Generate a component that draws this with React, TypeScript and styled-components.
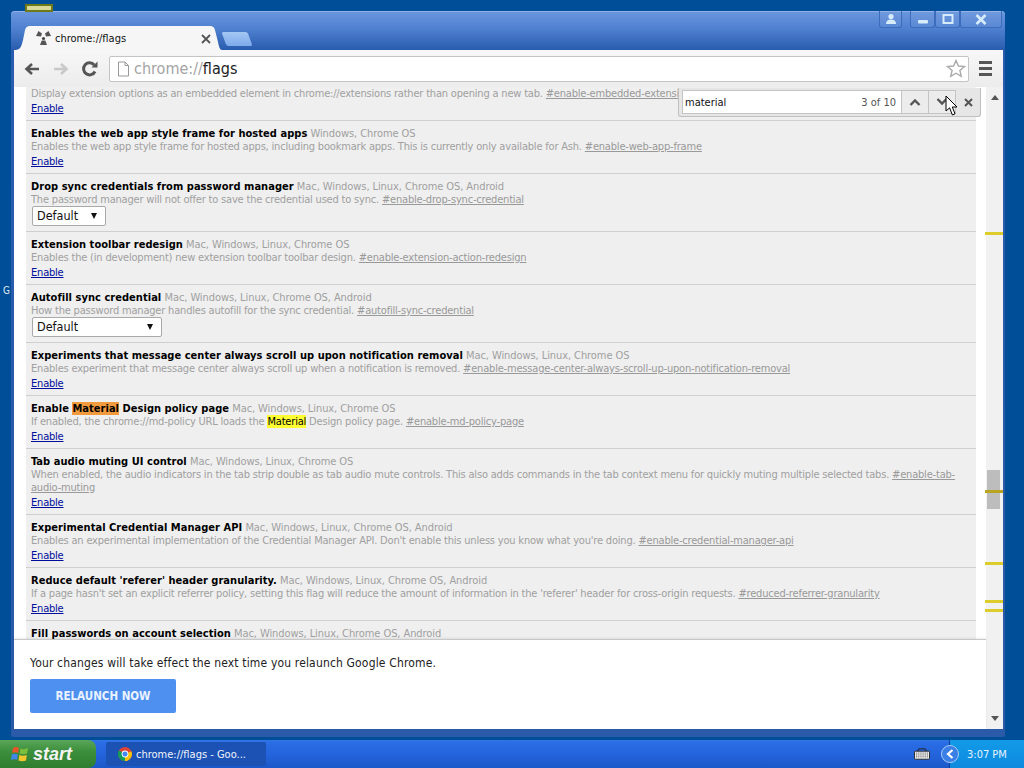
import React from "react";
import styled, { createGlobalStyle } from "styled-components";

const UI_FONT = `"DejaVu Sans", Tahoma, "Liberation Sans", sans-serif`;

const GlobalStyle = createGlobalStyle`
  html, body {
    margin: 0;
    padding: 0;
    width: 1024px;
    height: 768px;
    overflow: hidden;
  }
  body {
    font-family: ${UI_FONT};
    font-stretch: condensed;
  }
`;

const Screen = styled.div`
  width: 1024px;
  height: 768px;
  display: flex;
  flex-direction: column;
  overflow: hidden;
`;

const Desktop = styled.div`
  position: relative;
  flex: 1;
  min-height: 0;
  display: flex;
  padding: 11px 19px 3px 11px;
  background: #014e98;
`;

const DesktopIcon = styled.div`
  position: absolute;
  left: 25px;
  top: 4px;
  width: 28px;
  height: 8px;
  background: #d8d89a;
  border: 2px solid #6e7a18;
  box-sizing: border-box;
`;

const DesktopLetter = styled.div`
  position: absolute;
  left: 3px;
  top: 285px;
  font-size: 10px;
  line-height: 12px;
  color: #dfe8f4;
`;

const Window = styled.div`
  flex: 1;
  min-width: 0;
  display: flex;
  flex-direction: column;
  padding: 0 2px 8px 3px;
  border-radius: 4px 4px 2px 2px;
  background: linear-gradient(180deg, #6a96dd 0, #4f80d0 18px, #295cae 39px, #2a5aa8 100%);
  box-shadow: inset 0 1px 0 #8fb0e6;
`;

const TitleBar = styled.div`
  height: 39px;
  display: flex;
  align-items: flex-end;
  flex-shrink: 0;
`;

const Tab = styled.div`
  width: 208px;
  height: 24px;
  display: flex;
  align-items: center;
  gap: 3px;
  padding: 1px 11px 0 21px;
  box-sizing: border-box;
  background: #f6f6f6;
  clip-path: path("M0 24 C6 24 7 22 9 14 L11 4 C12 1 13 0 16 0 L196 0 C199 0 200 1 201 4 L204 16 C205 21 206 24 208 24 Z");
`;

const TabTitle = styled.span`
  flex: 1;
  font-size: 11px;
  color: #111;
`;

const TabClose = styled.span`
  display: flex;
`;

const NewTab = styled.div`
  width: 26px;
  height: 14px;
  margin: 0 0 4px 2px;
  background: linear-gradient(180deg, #a4c8f4, #7daaea);
  border-radius: 2px;
  transform: skewX(20deg);
`;

const CaptionGroup = styled.div`
  margin-left: auto;
  align-self: flex-start;
  display: flex;
  height: 17px;
  margin-right: 1px;
`;

const CaptionButton = styled.div<{ $width: number }>`
  width: ${(p) => p.$width}px;
  display: flex;
  align-items: center;
  justify-content: center;
  box-sizing: border-box;
  border: 1px solid #3c6cbc;
  border-top: 0;
  border-radius: 0 0 3px 3px;
  background: rgba(255, 255, 255, 0.05);
`;

const CaptionGap = styled.div`
  width: 8px;
`;

const Toolbar = styled.div`
  height: 37px;
  flex-shrink: 0;
  display: flex;
  align-items: center;
  padding-left: 3px;
  box-sizing: border-box;
  background: linear-gradient(180deg, #f7f7f7, #ececec);
`;

const NavIcon = styled.div`
  width: 29px;
  display: flex;
  justify-content: center;
`;

const AddressBar = styled.div`
  width: 860px;
  height: 26px;
  margin-left: 5px;
  display: flex;
  align-items: center;
  gap: 4px;
  padding: 0 2px 0 7px;
  box-sizing: border-box;
  background: #fff;
  border: 1px solid #c4c4c4;
  border-radius: 2px;
`;

const AddressText = styled.div`
  flex: 1;
  font-size: 16px;
  color: #a4a4a4;
`;

const AddressPath = styled.span`
  color: #222;
`;

const MenuIcon = styled.div`
  margin-left: 10px;
  display: flex;
  flex-direction: column;
  gap: 3px;
`;

const MenuLine = styled.div`
  width: 13px;
  height: 3px;
  background: #555;
`;

const Viewport = styled.div`
  position: relative;
  flex: 1;
  min-height: 0;
  display: flex;
  background: #fff;
`;

const PageColumn = styled.div`
  flex: 1;
  min-width: 0;
  display: flex;
  flex-direction: column;
`;

const FlagsPage = styled.div`
  flex: 1;
  min-height: 0;
  overflow: hidden;
  display: flex;
  padding-left: 12px;
`;

const FlagList = styled.div`
  flex: 1;
  min-width: 0;
  background: #efefef;
`;

const Gutter = styled.div`
  width: 10px;
  flex-shrink: 0;
`;

const FlagRow = styled.div`
  padding: 6px 20px 3px 5px;
  border-bottom: 1px solid #cfcfcf;

  &:first-child {
    padding-top: 0;
  }
`;

const FlagHeading = styled.div`
  font-size: 11px;
  line-height: 13px;
  white-space: nowrap;
`;

const FlagName = styled.span`
  font-weight: 700;
  letter-spacing: 0.04px;
  color: #000;
`;

const Platforms = styled.span`
  letter-spacing: -0.08px;
  color: #a0a0a0;
`;

const FlagDesc = styled.div`
  font-size: 11px;
  line-height: 13px;
  letter-spacing: -0.19px;
  color: #a0a0a0;
`;

const HashLink = styled.span`
  text-decoration: underline;
  color: #999;
`;

const Match = styled.span<{ $active?: boolean }>`
  color: #000;
  font-weight: inherit;
  background: ${(p) => (p.$active ? "#f19a3e" : "#ffff33")};
`;

const EnableLink = styled.div`
  font-size: 11px;
  line-height: 17px;
  letter-spacing: -0.2px;
  color: #000e9c;
  text-decoration: underline;
`;

const FlagSelect = styled.div<{ $width: number }>`
  width: ${(p) => p.$width}px;
  height: 20px;
  margin: 0 0 2px 1px;
  display: flex;
  align-items: center;
  justify-content: space-between;
  padding: 0 8px 1px 4px;
  box-sizing: border-box;
  background: #fff;
  border: 1px solid #a9a9a9;
  border-radius: 2px;
  font-size: 12.5px;
  color: #111;
`;

const SelectArrow = styled.span`
  width: 0;
  height: 0;
  border-left: 3.5px solid transparent;
  border-right: 3.5px solid transparent;
  border-top: 6px solid #111;
`;

const RelaunchBar = styled.div`
  height: 90px;
  flex-shrink: 0;
  box-sizing: border-box;
  padding: 15px 0 0 16px;
  background: #fff;
  border-top: 1px solid #c8c8c8;
  box-shadow: 0 -1px 2px rgba(0, 0, 0, 0.08);
  position: relative;
`;

const RelaunchText = styled.div`
  font-size: 12px;
  line-height: 16px;
  letter-spacing: 0.16px;
  color: #222;
`;

const RelaunchButton = styled.div`
  width: 146px;
  height: 34px;
  margin-top: 8px;
  display: flex;
  align-items: center;
  justify-content: center;
  background: #4d90f0;
  border-radius: 2px;
  color: #eaf2ff;
  font-size: 11.5px;
  font-weight: 700;
`;

const Scrollbar = styled.div`
  width: 17px;
  flex-shrink: 0;
  display: flex;
  flex-direction: column;
  justify-content: space-between;
  align-items: center;
  padding: 8px 0;
  box-sizing: border-box;
  background: #f1f1f1;
`;

const ScrollArrow = styled.span<{ $up?: boolean }>`
  width: 0;
  height: 0;
  border-left: 4px solid transparent;
  border-right: 4px solid transparent;
  ${(p) => (p.$up ? "border-bottom: 5px solid #555;" : "border-top: 5px solid #555;")}
`;

const ScrollThumb = styled.div`
  position: absolute;
  right: 3px;
  top: 383px;
  width: 13px;
  height: 39px;
  background: #bdbdbd;
`;

const ScrollTick = styled.div<{ $onThumb?: boolean }>`
  position: absolute;
  right: 0;
  width: 18px;
  height: 3px;
  margin-top: -1px;
  background: ${(p) => (p.$onThumb ? "#b8a420" : "#dccc2c")};
`;

const FindBar = styled.div`
  position: absolute;
  left: 664px;
  top: 1px;
  width: 303px;
  height: 29px;
  display: flex;
  align-items: center;
  padding-left: 3px;
  box-sizing: border-box;
  background: #e6e6e6;
  border: 1px solid #c0c0c0;
  border-top: 0;
  border-radius: 0 0 3px 3px;
`;

const FindField = styled.div`
  width: 274px;
  height: 24px;
  display: flex;
  align-items: center;
  box-sizing: border-box;
  background: #fff;
  border: 1px solid #c4c4c4;
`;

const FindInput = styled.span`
  flex: 1;
  padding-left: 2px;
  font-size: 11px;
  color: #111;
`;

const FindCount = styled.span`
  margin-right: 5px;
  font-size: 11px;
  color: #555;
`;

const FindStep = styled.div`
  width: 27px;
  height: 22px;
  display: flex;
  align-items: center;
  justify-content: center;
  box-sizing: border-box;
  background: #ececec;
  border-left: 1px solid #c4c4c4;
`;

const FindClose = styled.div`
  flex: 1;
  display: flex;
  justify-content: center;
`;

const Cursor = styled.svg`
  position: absolute;
  left: 931px;
  top: 8px;
`;

const Taskbar = styled.div`
  height: 28px;
  flex-shrink: 0;
  display: flex;
  align-items: center;
  background: linear-gradient(180deg, #2f76e8 0, #2a6ce4 3px, #2464dc 50%, #1c58c8 100%);
`;

const StartButton = styled.div`
  width: 96px;
  height: 28px;
  display: flex;
  align-items: center;
  gap: 4px;
  padding-left: 11px;
  box-sizing: border-box;
  background: linear-gradient(180deg, #5aa65a 0, #3c8f3c 40%, #2f7d2f 100%);
  border-radius: 0 8px 8px 0;
`;

const StartLabel = styled.span`
  font-family: "Liberation Sans", sans-serif;
  font-size: 18px;
  font-weight: 700;
  font-style: italic;
  color: #f4f4f4;
`;

const TaskButton = styled.div`
  width: 160px;
  height: 24px;
  margin-left: 10px;
  display: flex;
  align-items: center;
  gap: 4px;
  padding-left: 12px;
  box-sizing: border-box;
  background: #1c52b4;
  border-radius: 2px;
`;

const TaskLabel = styled.span`
  font-size: 11px;
  color: #f0f4fc;
`;

const Tray = styled.div`
  margin-left: auto;
  height: 100%;
  display: flex;
  align-items: center;
  gap: 19px;
`;

const TrayClock = styled.div`
  width: 75px;
  height: 100%;
  display: flex;
  align-items: center;
  background: linear-gradient(180deg, #129ae8, #0e8adf);
  border-left: 1px solid #0d3f9c;
  box-sizing: border-box;
`;

const TrayToggle = styled.div`
  width: 18px;
  height: 18px;
  margin-left: -9px;
  display: flex;
  align-items: center;
  justify-content: center;
  border-radius: 50%;
  background: #3a7fe6;
  border: 1px solid #a8cdf5;
  box-sizing: border-box;
`;

const ClockText = styled.span`
  margin-left: 8px;
  font-size: 11px;
  color: #e6f4ff;
`;

type Flag = {
  name?: React.ReactNode;
  platforms?: string;
  desc: React.ReactNode;
  hash: string;
  select?: number;
};

const flags: Flag[] = [
  {
    desc: "Display extension options as an embedded element in chrome://extensions rather than opening a new tab.",
    hash: "#enable-embedded-extension-options",
  },
  {
    name: "Enables the web app style frame for hosted apps",
    platforms: "Windows, Chrome OS",
    desc: "Enables the web app style frame for hosted apps, including bookmark apps. This is currently only available for Ash.",
    hash: "#enable-web-app-frame",
  },
  {
    name: "Drop sync credentials from password manager",
    platforms: "Mac, Windows, Linux, Chrome OS, Android",
    desc: "The password manager will not offer to save the credential used to sync.",
    hash: "#enable-drop-sync-credential",
    select: 74,
  },
  {
    name: "Extension toolbar redesign",
    platforms: "Mac, Windows, Linux, Chrome OS",
    desc: "Enables the (in development) new extension toolbar toolbar design.",
    hash: "#enable-extension-action-redesign",
  },
  {
    name: "Autofill sync credential",
    platforms: "Mac, Windows, Linux, Chrome OS, Android",
    desc: "How the password manager handles autofill for the sync credential.",
    hash: "#autofill-sync-credential",
    select: 130,
  },
  {
    name: "Experiments that message center always scroll up upon notification removal",
    platforms: "Mac, Windows, Linux, Chrome OS",
    desc: "Enables experiment that message center always scroll up when a notification is removed.",
    hash: "#enable-message-center-always-scroll-up-upon-notification-removal",
  },
  {
    name: (
      <>
        Enable <Match $active>Material</Match> Design policy page
      </>
    ),
    platforms: "Mac, Windows, Linux, Chrome OS",
    desc: (
      <>
        If enabled, the chrome://md-policy URL loads the <Match>Material</Match> Design policy page.
      </>
    ),
    hash: "#enable-md-policy-page",
  },
  {
    name: "Tab audio muting UI control",
    platforms: "Mac, Windows, Linux, Chrome OS",
    desc: "When enabled, the audio indicators in the tab strip double as tab audio mute controls. This also adds commands in the tab context menu for quickly muting multiple selected tabs.",
    hash: "#enable-tab-audio-muting",
  },
  {
    name: "Experimental Credential Manager API",
    platforms: "Mac, Windows, Linux, Chrome OS, Android",
    desc: "Enables an experimental implementation of the Credential Manager API. Don't enable this unless you know what you're doing.",
    hash: "#enable-credential-manager-api",
  },
  {
    name: "Reduce default 'referer' header granularity.",
    platforms: "Mac, Windows, Linux, Chrome OS, Android",
    desc: "If a page hasn't set an explicit referrer policy, setting this flag will reduce the amount of information in the 'referer' header for cross-origin requests.",
    hash: "#reduced-referrer-granularity",
  },
  {
    name: "Fill passwords on account selection",
    platforms: "Mac, Windows, Linux, Chrome OS, Android",
    desc: "Filling of passwords when an account is explicitly selected by the user.",
    hash: "#fill-passwords",
  },
];

const tickPositions = [233, 491, 563, 601, 610];

export default function App() {
  return (
    <>
      <GlobalStyle />
      <Screen>
        <Desktop>
          <DesktopIcon />
          <DesktopLetter>G</DesktopLetter>
          <Window>
            <TitleBar>
              <Tab>
                <svg width="17" height="17" viewBox="0 0 17 17">
                  <circle cx="8.5" cy="8.5" r="1.6" fill="#444" />
                  <path d="M1 6 L3.5 1 L7 3.5 L6 6.5 Z" fill="#555" />
                  <path d="M16 6 L13.5 1 L10 3.5 L11 6.5 Z" fill="#555" />
                  <path d="M5 15 L12 15 L10.3 10.5 L6.7 10.5 Z" fill="#555" />
                </svg>
                <TabTitle>chrome://flags</TabTitle>
                <TabClose>
                  <svg width="10" height="10" viewBox="0 0 10 10">
                    <path d="M1 1 L9 9 M9 1 L1 9" stroke="#555" strokeWidth="1.8" />
                  </svg>
                </TabClose>
              </Tab>
              <NewTab />
              <CaptionGroup>
                <CaptionButton $width={23}>
                  <svg width="12" height="12" viewBox="0 0 12 12">
                    <circle cx="6" cy="3.5" r="2.6" fill="#d6ecfb" />
                    <path d="M1 11 Q1 6.5 6 6.5 Q11 6.5 11 11 Z" fill="#d6ecfb" />
                  </svg>
                </CaptionButton>
                <CaptionGap />
                <CaptionButton $width={25}>
                  <svg width="12" height="12" viewBox="0 0 12 12">
                    <rect x="1" y="7" width="10" height="3.5" rx="1" fill="#d6ecfb" />
                  </svg>
                </CaptionButton>
                <CaptionButton $width={25}>
                  <svg width="12" height="12" viewBox="0 0 12 12">
                    <rect x="1.5" y="2" width="9" height="8" fill="none" stroke="#d6ecfb" strokeWidth="2" />
                  </svg>
                </CaptionButton>
                <CaptionButton $width={42}>
                  <svg width="12" height="11" viewBox="0 0 12 11">
                    <path d="M1.5 1 L10.5 10 M10.5 1 L1.5 10" stroke="#d6ecfb" strokeWidth="2.6" />
                  </svg>
                </CaptionButton>
              </CaptionGroup>
            </TitleBar>
            <Toolbar>
              <NavIcon>
                <svg width="18" height="16" viewBox="0 0 18 16">
                  <path d="M16 8 H4 M9 3 L3.5 8 L9 13" fill="none" stroke="#555" strokeWidth="2.6" />
                </svg>
              </NavIcon>
              <NavIcon>
                <svg width="18" height="16" viewBox="0 0 18 16">
                  <path d="M2 8 H14 M9 3 L14.5 8 L9 13" fill="none" stroke="#c8c8c8" strokeWidth="2.6" />
                </svg>
              </NavIcon>
              <NavIcon>
                <svg width="18" height="18" viewBox="0 0 18 18">
                  <path d="M14 11.5 A6 6 0 1 1 13.2 5" fill="none" stroke="#555" strokeWidth="3" />
                  <path d="M10.5 7.5 L16.5 7.5 L16.5 1.5 Z" fill="#555" />
                </svg>
              </NavIcon>
              <AddressBar>
                <svg width="13" height="16" viewBox="0 0 13 16">
                  <path d="M1.5 1 H8 L11.5 4.5 V15 H1.5 Z M8 1 V4.5 H11.5" fill="#fff" stroke="#999" />
                </svg>
                <AddressText>
                  chrome://<AddressPath>flags</AddressPath>
                </AddressText>
                <svg width="20" height="19" viewBox="0 0 20 19">
                  <path
                    d="M10 1.5 L12.4 7 L18.5 7.5 L13.9 11.4 L15.3 17.4 L10 14.2 L4.7 17.4 L6.1 11.4 L1.5 7.5 L7.6 7 Z"
                    fill="#fff"
                    stroke="#aaa"
                    strokeWidth="1.4"
                  />
                </svg>
              </AddressBar>
              <MenuIcon>
                <MenuLine />
                <MenuLine />
                <MenuLine />
              </MenuIcon>
            </Toolbar>
            <Viewport>
              <PageColumn>
                <FlagsPage>
                  <FlagList>
                    {flags.map((flag, i) => (
                      <FlagRow key={i}>
                        {flag.name && (
                          <FlagHeading>
                            <FlagName>{flag.name}</FlagName> <Platforms>{flag.platforms}</Platforms>
                          </FlagHeading>
                        )}
                        <FlagDesc>
                          {flag.desc} <HashLink>{flag.hash}</HashLink>
                        </FlagDesc>
                        {flag.select ? (
                          <FlagSelect $width={flag.select}>
                            <span>Default</span>
                            <SelectArrow />
                          </FlagSelect>
                        ) : (
                          <EnableLink>Enable</EnableLink>
                        )}
                      </FlagRow>
                    ))}
                  </FlagList>
                  <Gutter />
                </FlagsPage>
                <RelaunchBar>
                  <RelaunchText>Your changes will take effect the next time you relaunch Google Chrome.</RelaunchText>
                  <RelaunchButton>RELAUNCH NOW</RelaunchButton>
                </RelaunchBar>
              </PageColumn>
              <Scrollbar>
                <ScrollArrow $up />
                <ScrollArrow />
              </Scrollbar>
              <ScrollThumb />
              {tickPositions.map((y) => (
                <ScrollTick key={y} $onThumb={y === 491} style={{ top: y - 87 }} />
              ))}
              <FindBar>
                <FindField>
                  <FindInput>material</FindInput>
                  <FindCount>3 of 10</FindCount>
                  <FindStep>
                    <svg width="12" height="8" viewBox="0 0 12 8">
                      <path d="M1.5 7 L6 2.5 L10.5 7" fill="none" stroke="#555" strokeWidth="2.4" />
                    </svg>
                  </FindStep>
                  <FindStep>
                    <svg width="12" height="8" viewBox="0 0 12 8">
                      <path d="M1.5 1 L6 5.5 L10.5 1" fill="none" stroke="#555" strokeWidth="2.4" />
                    </svg>
                  </FindStep>
                </FindField>
                <FindClose>
                  <svg width="9" height="9" viewBox="0 0 9 9">
                    <path d="M1 1 L8 8 M8 1 L1 8" stroke="#555" strokeWidth="2" />
                  </svg>
                </FindClose>
              </FindBar>
              <Cursor width="14" height="22" viewBox="0 0 14 22">
                <path
                  d="M1 1 L1 16 L4.6 12.8 L7.4 20 L10 18.8 L7.3 12 L12 12 Z"
                  fill="#fff"
                  stroke="#000"
                  strokeWidth="1"
                />
              </Cursor>
            </Viewport>
          </Window>
        </Desktop>
        <Taskbar>
          <StartButton>
            <svg width="18" height="18" viewBox="0 0 18 18">
              <path d="M2 3 Q5 1 8 3 L7 8 Q4 6.5 1 8 Z" fill="#e8562a" />
              <path d="M9.5 3.5 Q13 5 17 3 L16 8.5 Q12 10 8.5 8.5 Z" fill="#7bbf3c" />
              <path d="M0.8 9.5 Q4 8 6.8 9.5 L6 15 Q3 13.5 0 15 Z" fill="#3f86e8" />
              <path d="M8.3 10 Q12 11.5 15.8 10 L15 15.5 Q11.5 17 7.5 15.5 Z" fill="#f5c52e" />
            </svg>
            <StartLabel>start</StartLabel>
          </StartButton>
          <TaskButton>
            <svg width="14" height="14" viewBox="0 0 14 14">
              <circle cx="7" cy="7" r="7" fill="#db4437" />
              <path d="M7 7 L13.4 4.2 A7 7 0 0 1 7 14 Z" fill="#f4c20d" />
              <path d="M7 7 L7 14 A7 7 0 0 1 1 3.4 Z" fill="#0f9d58" />
              <circle cx="7" cy="7" r="3.4" fill="#fff" />
              <circle cx="7" cy="7" r="2.5" fill="#4285f4" />
            </svg>
            <TaskLabel>chrome://flags - Goo...</TaskLabel>
          </TaskButton>
          <Tray>
            <svg width="16" height="12" viewBox="0 0 17 12">
              <rect x="0.5" y="3" width="16" height="8.5" rx="1" fill="#f4f4f4" stroke="#222" />
              <path d="M2 5 H15 M2 7 H15 M2 9 H15" stroke="#333" strokeWidth="1" strokeDasharray="1 1" />
              <path d="M4 3 L5 0.5 H12 L13 3" fill="none" stroke="#222" />
            </svg>
            <TrayClock>
              <TrayToggle>
                <svg width="8" height="10" viewBox="0 0 8 10">
                  <path d="M6.5 1 L2 5 L6.5 9" fill="none" stroke="#fff" strokeWidth="2.2" />
                </svg>
              </TrayToggle>
              <ClockText>3:07 PM</ClockText>
            </TrayClock>
          </Tray>
        </Taskbar>
      </Screen>
    </>
  );
}
